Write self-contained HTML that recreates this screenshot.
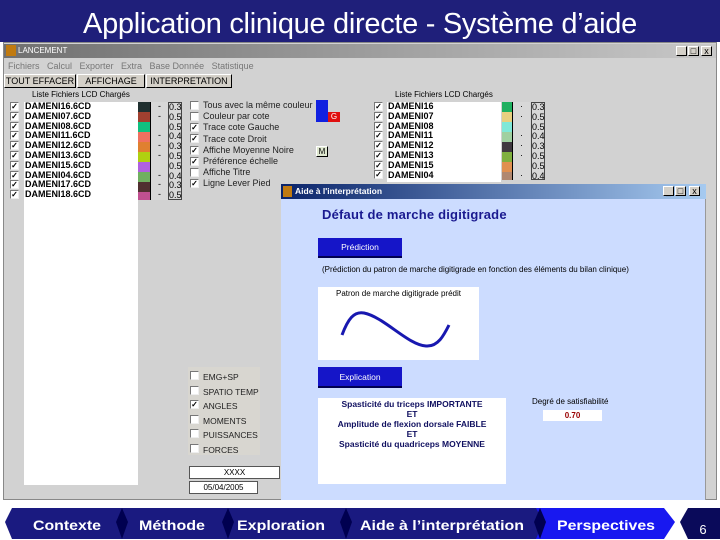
<!DOCTYPE html>
<html><head><meta charset="utf-8"><style>
*{margin:0;padding:0;box-sizing:border-box}
body{width:720px;height:540px;overflow:hidden;background:#fff;font-family:"Liberation Sans",sans-serif;position:relative}
.a{position:absolute}
.t{font-size:9px;color:#000;white-space:nowrap;line-height:10px}
.cb{position:absolute;width:9px;height:9px;background:#fff;border:1px solid #777;border-right-color:#eee;border-bottom-color:#eee;font-size:8px;line-height:7px;text-align:center;font-weight:bold}
.btn{position:absolute;background:#d4d0c8;border:1px solid #000;border-top-color:#fff;border-left-color:#fff;font-size:9px;text-align:center;line-height:12px}
.nm{font-weight:bold;font-size:9px;line-height:9.8px;color:#000}
</style></head><body>
<div class="a" style="left:0;top:0;width:720px;height:42px;background:#1f1f7a"></div>
<div class="a" style="left:0;top:4px;width:720px;text-align:center;color:#fff;font-size:29px;line-height:40px;letter-spacing:-0.3px">Application clinique directe - Système d’aide</div>

<div class="a" style="left:3px;top:42px;width:714px;height:458px;background:#d2d2d2;border:1px solid #888"></div>
<div class="a" style="left:4px;top:44px;width:712px;height:14px;background:linear-gradient(90deg,#707070,#c8c8c8)"></div>
<div class="a" style="left:6px;top:45px;width:10px;height:11px;background:#c07a10"></div>
<div class="a t" style="left:18px;top:46px;color:#fff;font-size:8px">LANCEMENT</div>
<div class="btn" style="left:676px;top:46px;width:11px;height:10px;line-height:8px">_</div>
<div class="btn" style="left:688px;top:46px;width:11px;height:10px;line-height:8px">□</div>
<div class="btn" style="left:701px;top:46px;width:11px;height:10px;line-height:8px">x</div>
<div class="a t" style="left:8px;top:61px;color:#777">Fichiers&nbsp;&nbsp; Calcul&nbsp;&nbsp; Exporter&nbsp;&nbsp; Extra&nbsp;&nbsp; Base Donnée&nbsp;&nbsp; Statistique</div>
<div class="btn" style="left:4px;top:74px;width:72px;height:14px">TOUT EFFACER</div>
<div class="btn" style="left:77px;top:74px;width:68px;height:14px">AFFICHAGE</div>
<div class="btn" style="left:146px;top:74px;width:86px;height:14px">INTERPRETATION</div>

<div class="a t" style="left:32px;top:90px;font-size:8px">Liste Fichiers LCD Chargés</div>
<div class="a" style="left:24px;top:102px;width:114px;height:383px;background:#fff"></div>
<div class="a" style="left:10px;top:102px">
<div style="position:relative;height:100px">
<div class="cb" style="top:0">✓</div><div class="cb" style="top:10px">✓</div><div class="cb" style="top:20px">✓</div><div class="cb" style="top:29px">✓</div><div class="cb" style="top:39px">✓</div><div class="cb" style="top:49px">✓</div><div class="cb" style="top:59px">✓</div><div class="cb" style="top:69px">✓</div><div class="cb" style="top:78px">✓</div><div class="cb" style="top:88px">✓</div>
</div></div>
<div class="a nm" style="left:25px;top:102px">DAMENI16.6CD<br>DAMENI07.6CD<br>DAMENI08.6CD<br>DAMENI11.6CD<br>DAMENI12.6CD<br>DAMENI13.6CD<br>DAMENI15.6CD<br>DAMENI04.6CD<br>DAMENI17.6CD<br>DAMENI18.6CD</div>
<div class="a" style="left:138px;top:102px;width:12px">
<div style="height:10px;background:#203030"></div><div style="height:10px;background:#a04030"></div><div style="height:10px;background:#10c080"></div><div style="height:10px;background:#f07060"></div><div style="height:10px;background:#e08030"></div><div style="height:10px;background:#b0d010"></div><div style="height:10px;background:#b060e0"></div><div style="height:10px;background:#70b060"></div><div style="height:10px;background:#503030"></div><div style="height:8px;background:#c05090"></div></div>
<div class="a t" style="left:150px;top:102px;width:18px;height:98px;background:#d8d8d8;border-left:1px solid #000;text-align:center;line-height:9.8px">-<br>-<br>&nbsp;<br>-<br>-<br>-<br>&nbsp;<br>-<br>-<br>-</div>
<div class="a t" style="left:168px;top:102px;width:14px;height:98px;background:#d8d8d8;border:1px solid #444;line-height:9.8px">0.3<br>0.5<br>0.5<br>0.4<br>0.3<br>0.5<br>0.5<br>0.4<br>0.3<br>0.5</div>

<div class="a" style="left:190px;top:101px">
<div class="cb" style="top:0"></div><div class="cb" style="top:11px"></div><div class="cb" style="top:22px">✓</div><div class="cb" style="top:33px">✓</div><div class="cb" style="top:45px">✓</div><div class="cb" style="top:56px">✓</div><div class="cb" style="top:67px"></div><div class="cb" style="top:78px">✓</div></div>
<div class="a t" style="left:203px;top:100px;line-height:11.2px;color:#222">Tous avec la même couleur<br>Couleur par cote<br>Trace cote Gauche<br>Trace cote Droit<br>Affiche Moyenne Noire<br>Préférence échelle<br>Affiche Titre<br>Ligne Lever Pied</div>
<div class="a" style="left:316px;top:100px;width:12px;height:22px;background:#1020e0"></div>
<div class="a" style="left:328px;top:112px;width:12px;height:10px;background:#e01010;color:#fff;font-size:8px;text-align:center;line-height:10px">G</div>
<div class="btn" style="left:316px;top:146px;width:12px;height:11px;font-size:8px;line-height:9px;background:#dfe8d0">M</div>

<div class="a t" style="left:395px;top:90px;font-size:8px">Liste Fichiers LCD Chargés</div>
<div class="a" style="left:387px;top:102px;width:114px;height:80px;background:#fff"></div>
<div class="a" style="left:374px;top:102px">
<div class="cb" style="top:0">✓</div><div class="cb" style="top:10px">✓</div><div class="cb" style="top:20px">✓</div><div class="cb" style="top:29px">✓</div><div class="cb" style="top:39px">✓</div><div class="cb" style="top:49px">✓</div><div class="cb" style="top:59px">✓</div><div class="cb" style="top:68px">✓</div></div>
<div class="a nm" style="left:388px;top:102px">DAMENI16<br>DAMENI07<br>DAMENI08<br>DAMENI11<br>DAMENI12<br>DAMENI13<br>DAMENI15<br>DAMENI04</div>
<div class="a" style="left:502px;top:102px;width:10px">
<div style="height:10px;background:#20b060"></div><div style="height:10px;background:#e8d080"></div><div style="height:10px;background:#80e8d8"></div><div style="height:10px;background:#a0d0a0"></div><div style="height:10px;background:#403840"></div><div style="height:10px;background:#80b040"></div><div style="height:10px;background:#e09050"></div><div style="height:8px;background:#b08870"></div></div>
<div class="a t" style="left:512px;top:102px;width:18px;height:78px;background:#d8d8d8;border-left:1px solid #000;text-align:center;line-height:9.8px">·<br>·<br>&nbsp;<br>·<br>·<br>·<br>&nbsp;<br>·</div>
<div class="a t" style="left:531px;top:102px;width:14px;height:78px;background:#d8d8d8;border:1px solid #444;line-height:9.8px">0.3<br>0.5<br>0.5<br>0.4<br>0.3<br>0.5<br>0.5<br>0.4</div>

<div class="a" style="left:188px;top:367px;width:72px;height:88px;background:#d8d6d0"></div>
<div class="a" style="left:190px;top:371px">
<div class="cb" style="top:0"></div><div class="cb" style="top:14.5px"></div><div class="cb" style="top:29px">✓</div><div class="cb" style="top:43.5px"></div><div class="cb" style="top:58px"></div><div class="cb" style="top:72.5px"></div></div>
<div class="a t" style="left:203px;top:370px;line-height:14.5px;color:#222;font-size:8.5px">EMG+SP<br>SPATIO TEMP<br>ANGLES<br>MOMENTS<br>PUISSANCES<br>FORCES</div>
<div class="a t" style="left:189px;top:466px;width:91px;height:13px;background:#fff;border:1px solid #555;text-align:center;font-size:8px;line-height:11px">XXXX</div>
<div class="a t" style="left:189px;top:481px;width:69px;height:13px;background:#fff;border:1px solid #555;text-align:center;font-size:8px;line-height:11px">05/04/2005</div>

<div class="a" style="left:281px;top:184px;width:425px;height:316px;background:#ccdcff;border-right:1px solid #999"></div>
<div class="a" style="left:281px;top:184px;width:425px;height:15px;background:linear-gradient(90deg,#0a246a,#a6caf0)"></div>
<div class="a" style="left:283px;top:186px;width:9px;height:11px;background:#c07a10"></div>
<div class="a t" style="left:295px;top:186px;color:#fff;font-weight:bold;font-size:8.5px">Aide à l'interprétation</div>
<div class="btn" style="left:663px;top:186px;width:11px;height:10px;line-height:8px">_</div>
<div class="btn" style="left:675px;top:186px;width:11px;height:10px;line-height:8px">□</div>
<div class="btn" style="left:689px;top:186px;width:11px;height:10px;line-height:8px">x</div>
<div class="a" style="left:322px;top:207px;color:#1a1a90;font-size:13px;font-weight:bold;letter-spacing:.2px">Défaut de marche digitigrade</div>
<div class="a" style="left:318px;top:238px;width:84px;height:20px;background:#1515c8;border-bottom:2px solid #000050;color:#fff;font-size:8.5px;text-align:center;line-height:18px">Prédiction</div>
<div class="a t" style="left:322px;top:265px;font-size:8px">(Prédiction du patron de marche digitigrade en fonction des éléments du bilan clinique)</div>
<div class="a" style="left:318px;top:287px;width:161px;height:73px;background:#fff"></div>
<div class="a t" style="left:336px;top:289px;font-size:8px">Patron de marche digitigrade prédit</div>
<svg class="a" style="left:318px;top:287px" width="161" height="73"><path d="M24 48 C30 32 36 24 46 26 C66 30 90 58 108 59 C120 60 126 48 131 38" fill="none" stroke="#1818b0" stroke-width="3"/></svg>
<div class="a" style="left:318px;top:367px;width:84px;height:21px;background:#1515c8;border-bottom:2px solid #000050;color:#fff;font-size:8.5px;text-align:center;line-height:20px">Explication</div>
<div class="a" style="left:318px;top:398px;width:188px;height:86px;background:#fff"></div>
<div class="a" style="left:318px;top:399px;width:188px;text-align:center;font-size:8.5px;line-height:10px;font-weight:bold;color:#101060">Spasticité du triceps IMPORTANTE<br>ET<br>Amplitude de flexion dorsale FAIBLE<br>ET<br>Spasticité du quadriceps MOYENNE</div>
<div class="a t" style="left:532px;top:397px;font-size:8px">Degré de satisfiabilité</div>
<div class="a" style="left:543px;top:410px;width:59px;height:11px;background:#fff;color:#900;font-size:8px;text-align:center;line-height:11px;font-weight:bold">0.70</div>

<svg class="a" style="left:0;top:505px" width="720" height="35">
<polygon points="12,3 122,3 128,17 122,34 12,34 5,17" fill="#1a1a80"/>
<polygon points="118,3 228,3 234,17 228,34 118,34 124,17" fill="#1a1a80"/>
<polygon points="222,3 346,3 352,17 346,34 222,34 228,17" fill="#1a1a80"/>
<polygon points="340,3 540,3 546,17 540,34 340,34 346,17" fill="#1a1a80"/>
<polygon points="536,3 664,3 675,17 664,34 536,34 543,17" fill="#1818f0"/>
<polygon points="122,3 128,17 122,34 116,17" fill="#000050"/>
<polygon points="228,3 234,17 228,34 222,17" fill="#000050"/>
<polygon points="346,3 352,17 346,34 340,17" fill="#000050"/>
<polygon points="540,3 546,17 540,34 534,17" fill="#000050"/>
<polygon points="688,3 720,3 720,34 688,34 680,17" fill="#0a0a5a"/>
<g fill="#fff" font-family="Liberation Sans,sans-serif" font-size="14" font-weight="bold">
<text x="67" y="25" text-anchor="middle" textLength="68" lengthAdjust="spacingAndGlyphs">Contexte</text>
<text x="172" y="25" text-anchor="middle" textLength="66" lengthAdjust="spacingAndGlyphs">Méthode</text>
<text x="281" y="25" text-anchor="middle" textLength="88" lengthAdjust="spacingAndGlyphs">Exploration</text>
<text x="442" y="25" text-anchor="middle" textLength="164" lengthAdjust="spacingAndGlyphs">Aide à l’interprétation</text>
<text x="606" y="25" text-anchor="middle" textLength="98" lengthAdjust="spacingAndGlyphs">Perspectives</text>
<text x="703" y="29" text-anchor="middle" font-size="13" font-weight="normal">6</text>
</g></svg>
</body></html>
